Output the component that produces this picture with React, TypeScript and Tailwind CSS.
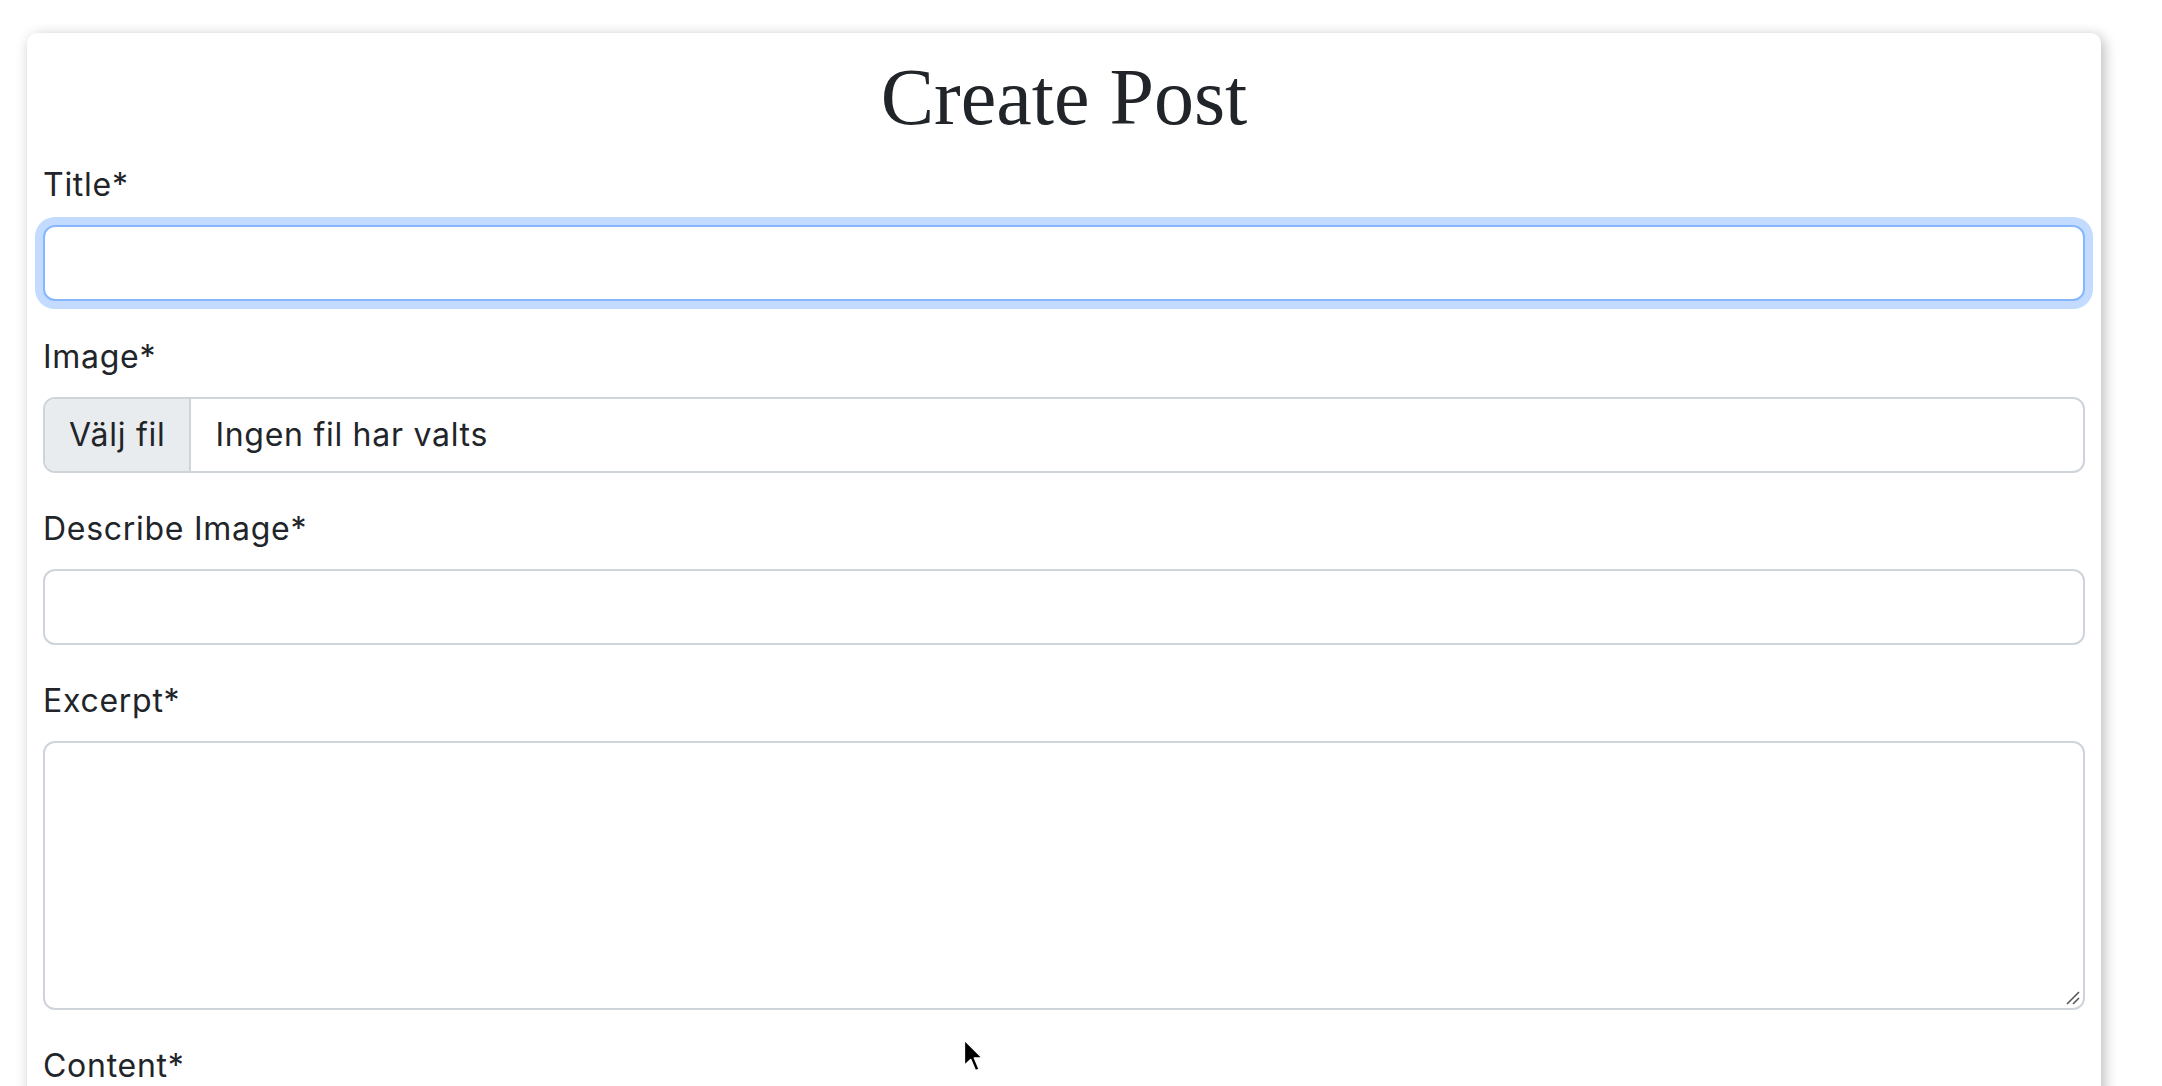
import React from "react";

function Label({ children }: { children: React.ReactNode }) {
  return (
    <label className="block text-[32px] leading-[48px] mb-[16px] text-[#212529]">
      {children}
    </label>
  );
}

export default function App() {
  return (
    <div
      className="relative min-h-screen bg-white overflow-hidden tracking-[0.045em]"
      style={{ fontFamily: "Inter, 'Noto Sans', sans-serif" }}
    >
      <div className="ml-[27px] mt-[33px] w-[2074px] bg-white rounded-[10px] shadow-[3px_3px_14px_rgba(0,0,0,0.28)] px-[16px] pt-[16px] pb-[40px] h-[1200px]">
        <h1
          className="text-center text-[80px] leading-[96px] font-normal tracking-normal text-[#212529] mb-[16px]"
          style={{ fontFamily: "'Liberation Serif', 'Times New Roman', serif" }}
        >
          Create Post
        </h1>

        <div className="mb-[32px]">
          <Label>Title*</Label>
          <div className="h-[76px] rounded-[12px] border-2 border-[#86b7fe] bg-white shadow-[0_0_0_8px_rgba(13,110,253,0.25)]" />
        </div>

        <div className="mb-[32px]">
          <Label>Image*</Label>
          <div className="flex h-[76px] rounded-[12px] border-2 border-[#ced4da] overflow-hidden bg-white text-[32px] text-[#212529]">
            <div className="flex items-center bg-[#e9ecef] px-[24px] border-r-2 border-[#ced4da]">
              Välj fil
            </div>
            <div className="flex items-center pl-[24px]">Ingen fil har valts</div>
          </div>
        </div>

        <div className="mb-[32px]">
          <Label>Describe Image*</Label>
          <div className="h-[76px] rounded-[12px] border-2 border-[#ced4da] bg-white" />
        </div>

        <div className="mb-[32px]">
          <Label>Excerpt*</Label>
          <div className="relative h-[269px] rounded-[12px] border-2 border-[#ced4da] bg-white">
            <svg
              className="absolute right-[2px] bottom-[2px]"
              width="16"
              height="16"
              viewBox="0 0 16 16"
            >
              <line x1="2" y1="14" x2="14" y2="2" stroke="#555" strokeWidth="1.6" />
              <line x1="8" y1="14" x2="14" y2="8" stroke="#555" strokeWidth="1.6" />
            </svg>
          </div>
        </div>

        <div>
          <Label>Content*</Label>
        </div>
      </div>

      <svg
        className="absolute left-[963px] top-[1039px]"
        width="26"
        height="36"
        viewBox="0 0 24 34"
      >
        <path
          d="M1 1 L1 25 L7 19.5 L11.5 30 L15 28.5 L10.5 18 L18 18 Z"
          fill="#000"
          stroke="#fff"
          strokeWidth="1.5"
          strokeLinejoin="round"
        />
      </svg>
    </div>
  );
}
